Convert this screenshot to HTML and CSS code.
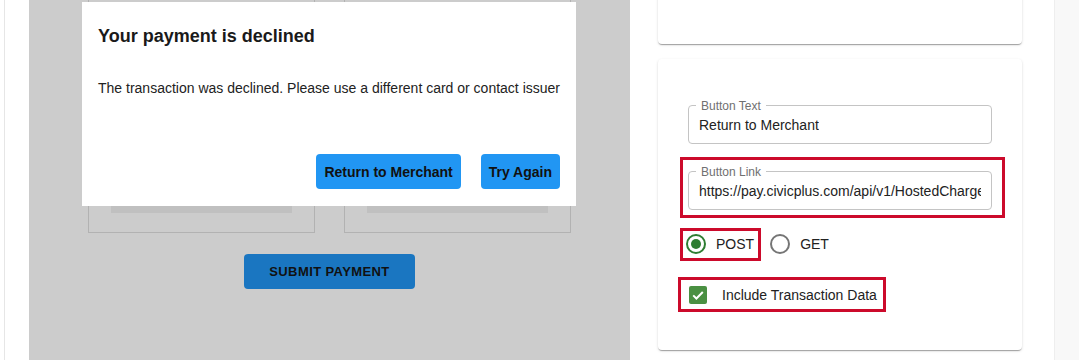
FILE: index.html
```html
<!DOCTYPE html>
<html lang="en">
<head>
    <meta charset="UTF-8">
    <title>Payment Result Settings</title>
    <link rel="stylesheet" href="styles.css">
</head>
<body>
    <div class="page">
        <div class="preview-wrap">
            <div class="preview-pane">
                <div class="form-mock">
                    <div class="mock-row">
                        <div class="mock-box"><div class="mock-bar"></div></div>
                        <div class="mock-box"><div class="mock-bar"></div></div>
                    </div>
                    <button class="submit-btn">SUBMIT PAYMENT</button>
                </div>

                <div class="modal">
                    <h2 class="modal-title">Your payment is declined</h2>
                    <p class="modal-text">The transaction was declined. Please use a different card or contact issuer</p>
                    <div class="modal-actions">
                        <button class="modal-btn">Return to Merchant</button>
                        <button class="modal-btn">Try Again</button>
                    </div>
                </div>
            </div>
        </div>

        <div class="settings">
            <div class="card card-top"></div>

            <div class="card card-main">
                <div class="field">
                    <span class="field-label">Button Text</span>
                    <span class="field-value">Return to Merchant</span>
                </div>

                <div class="field field-link">
                    <span class="field-label">Button Link</span>
                    <span class="field-value">https://pay.civicplus.com/api/v1/HostedChargeResult</span>
                </div>

                <div class="radio-row">
                    <label class="radio">
                        <span class="radio-ring checked"><span class="radio-dot"></span></span>
                        POST
                    </label>
                    <label class="radio radio-get">
                        <span class="radio-ring"></span>
                        GET
                    </label>
                </div>

                <label class="check-row">
                    <span class="check-box">
                        <svg width="18" height="18" viewBox="0 0 18 18"><path d="M4.2 9.4 L7.4 12.5 L13.8 6" fill="none" stroke="#fff" stroke-width="2"/></svg>
                    </span>
                    Include Transaction Data
                </label>

                <!-- review highlights -->
                <div class="highlight hl-link"></div>
                <div class="highlight hl-post"></div>
                <div class="highlight hl-check"></div>
            </div>
        </div>

        <div class="side-strip"></div>
    </div>
</body>
</html>
```

FILE: styles.css
```css
body {
    margin: 0;
    font-family: "Liberation Sans", Arial, sans-serif;
    background-color: #fff;
    color: #222;
    overflow: hidden;
}

.page {
    display: flex;
    height: 360px;
}

.preview-wrap {
    margin-left: 4px;
    padding-left: 24px;
    border-left: 1px solid #e6e6e6;
}

.preview-pane {
    position: relative;
    width: 601px;
    height: 360px;
    background-color: #ccc;
    overflow: hidden;
}

.form-mock {
    padding: 0 59px;
}

.mock-row {
    display: flex;
    gap: 29px;
    margin-top: -30px;
}

.mock-box {
    width: 227px;
    height: 263px;
    box-sizing: border-box;
    border: 1px solid #b2b2b2;
    padding: 0 22px 19px;
    display: flex;
    align-items: flex-end;
}

.mock-bar {
    flex: 1;
    height: 24px;
    background-color: #c0c0c0;
}

.submit-btn {
    display: block;
    margin: 21px auto 0;
    width: 171px;
    height: 35px;
    border: none;
    border-radius: 4px;
    background-color: #1a76c1;
    color: #111;
    font-family: inherit;
    font-size: 13px;
    font-weight: bold;
    letter-spacing: 0.4px;
}

.modal {
    position: absolute;
    left: 53px;
    top: 2px;
    width: 494px;
    height: 204px;
    box-sizing: border-box;
    padding: 22px 16px 17px;
    background-color: #fff;
    display: flex;
    flex-direction: column;
}

.modal-title {
    margin: 0;
    font-size: 18px;
    line-height: 24px;
    font-weight: bold;
    color: #1a1a1a;
}

.modal-text {
    margin: 30px 0 0;
    font-size: 14px;
    line-height: 20px;
    white-space: nowrap;
    color: #222;
}

.modal-actions {
    margin-top: auto;
    display: flex;
    justify-content: flex-end;
    gap: 20px;
}

.modal-btn {
    height: 35px;
    padding: 0 8px;
    border: none;
    border-radius: 4px;
    background-color: #2196f3;
    color: #111;
    font-family: inherit;
    font-size: 14px;
    font-weight: bold;
}

.settings {
    margin-left: 28px;
    width: 364px;
}

.card {
    background-color: #fff;
    border-radius: 4px;
    box-shadow: 0 2px 1px -1px rgba(0, 0, 0, 0.2), 0 1px 1px 0 rgba(0, 0, 0, 0.14), 0 1px 3px 0 rgba(0, 0, 0, 0.12);
}

.card-top {
    height: 80px;
    margin-top: -36px;
}

.card-main {
    position: relative;
    margin-top: 15px;
    height: 291px;
    box-sizing: border-box;
    padding: 46px 30px 0;
}

.field {
    position: relative;
    height: 39px;
    box-sizing: border-box;
    border: 1px solid #c4c4c4;
    border-radius: 4px;
    padding: 0 10px;
    display: flex;
    align-items: center;
    font-size: 14px;
}

.field-link {
    margin-top: 27px;
}

.field-label {
    position: absolute;
    top: -7px;
    left: 7px;
    padding: 0 5px;
    background-color: #fff;
    font-size: 12px;
    line-height: 14px;
    color: #707070;
}

.field-value {
    white-space: nowrap;
    overflow: hidden;
}

.radio-row {
    margin: 17px 0 0 -2px;
    height: 34px;
    display: flex;
    align-items: center;
    font-size: 14px;
}

.radio {
    display: flex;
    align-items: center;
    gap: 10px;
}

.radio-get {
    margin-left: 16px;
}

.radio-ring {
    width: 20px;
    height: 20px;
    box-sizing: border-box;
    border: 2px solid #757575;
    border-radius: 50%;
    display: flex;
    align-items: center;
    justify-content: center;
}

.radio-ring.checked {
    border-color: #2e7d32;
}

.radio-dot {
    width: 10px;
    height: 10px;
    border-radius: 50%;
    background-color: #2e7d32;
}

.check-row {
    margin: 17px 0 0 1px;
    height: 34px;
    display: flex;
    align-items: center;
    gap: 15px;
    font-size: 14px;
}

.check-box {
    width: 18px;
    height: 18px;
    border-radius: 2px;
    background-color: #4a9042;
    display: flex;
}

.highlight {
    position: absolute;
    box-sizing: border-box;
    border: 3px solid #cc0a2b;
}

.hl-link {
    left: 22px;
    top: 98px;
    width: 325px;
    height: 61px;
}

.hl-post {
    left: 22px;
    top: 169px;
    width: 81px;
    height: 33px;
}

.hl-check {
    left: 20px;
    top: 218px;
    width: 208px;
    height: 35px;
}

.side-strip {
    margin-left: 32px;
    flex: 1;
    background-color: #f8f8f8;
    border-left: 1px solid #eee;
}
```
